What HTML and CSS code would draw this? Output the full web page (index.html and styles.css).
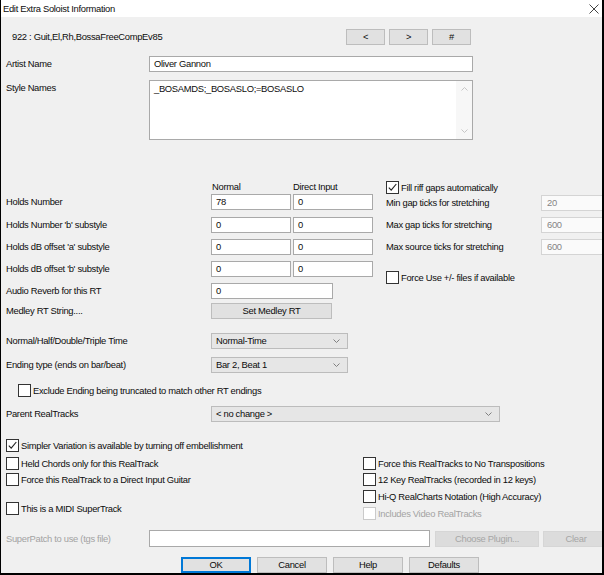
FILE: index.html
```html
<!DOCTYPE html>
<html>
<head>
<meta charset="utf-8">
<link rel="stylesheet" href="styles.css">
</head>
<body>
<div class="win">
  <div class="titlebar">
    <span class="title">Edit Extra Soloist Information</span>
    <svg class="close" width="10" height="10" viewBox="0 0 10 10"><path d="M0.5 0.5L9.5 9.5M9.5 0.5L0.5 9.5" stroke="#444" stroke-width="1"/></svg>
  </div>
  <div class="body">
    <div class="row r-id">
      <span class="idtext">922 : Guit,El,Rh,BossaFreeCompEv85</span>
      <div class="btn nav">&lt;</div>
      <div class="btn nav">&gt;</div>
      <div class="btn nav">#</div>
    </div>
    <div class="row r-artist">
      <span class="lbl">Artist Name</span>
      <div class="field wide">Oliver Gannon</div>
    </div>
    <div class="row r-style">
      <span class="lbl top">Style Names</span>
      <div class="field wide area">
        <span class="areatext">_BOSAMDS;_BOSASLO;=BOSASLO</span>
        <div class="scroll">
          <svg width="9" height="6" viewBox="0 0 9 6"><path d="M1.5 4.5L4.5 1.5L7.5 4.5" fill="none" stroke="#c6c6c6" stroke-width="1"/></svg>
          <svg width="9" height="6" viewBox="0 0 9 6"><path d="M1.5 1.5L4.5 4.5L7.5 1.5" fill="none" stroke="#c6c6c6" stroke-width="1"/></svg>
        </div>
      </div>
    </div>

    <div class="mid">
      <div class="midleft">
        <div class="hdr"><span class="h1">Normal</span><span class="h2">Direct Input</span></div>
        <div class="hrow r1"><span class="lbl2">Holds Number</span><div class="field num">78</div><div class="field num">0</div></div>
        <div class="hrow r2"><span class="lbl2">Holds Number 'b' substyle</span><div class="field num">0</div><div class="field num">0</div></div>
        <div class="hrow"><span class="lbl2">Holds dB offset 'a' substyle</span><div class="field num">0</div><div class="field num">0</div></div>
        <div class="hrow"><span class="lbl2">Holds dB offset 'b' substyle</span><div class="field num">0</div><div class="field num">0</div></div>
        <div class="hrow"><span class="lbl2">Audio Reverb for this RT</span><div class="field med">0</div></div>
        <div class="hrow r6"><span class="lbl2">Medley RT String....</span><div class="btn medbtn">Set Medley RT</div></div>
      </div>
      <div class="midright">
        <div class="chk"><span class="box"><svg width="11" height="11" viewBox="0 0 11 11"><path d="M1.8 5.6L4.2 8.2L9.3 2" fill="none" stroke="#222" stroke-width="1.1"/></svg></span>Fill riff gaps automatically</div>
        <div class="rrow first"><span class="rlbl">Min gap ticks for stretching</span><div class="field dis">20</div></div>
        <div class="rrow"><span class="rlbl">Max gap ticks for stretching</span><div class="field dis">600</div></div>
        <div class="rrow"><span class="rlbl">Max source ticks for stretching</span><div class="field dis">600</div></div>
        <div class="chk force"><span class="box"></span>Force Use +/- files if available</div>
      </div>
    </div>

    <div class="row r-time">
      <span class="lbl2">Normal/Half/Double/Triple Time</span>
      <div class="select s137">Normal-Time<svg width="9" height="6" viewBox="0 0 9 6"><path d="M1.5 1.5L4.5 4.5L7.5 1.5" fill="none" stroke="#808080" stroke-width="1"/></svg></div>
    </div>
    <div class="row r-end">
      <span class="lbl2">Ending type (ends on bar/beat)</span>
      <div class="select s137">Bar 2, Beat 1<svg width="9" height="6" viewBox="0 0 9 6"><path d="M1.5 1.5L4.5 4.5L7.5 1.5" fill="none" stroke="#808080" stroke-width="1"/></svg></div>
    </div>
    <div class="chk excl"><span class="box"></span>Exclude Ending being truncated to match other RT endings</div>
    <div class="row r-parent">
      <span class="lbl2">Parent RealTracks</span>
      <div class="select s289">&lt; no change &gt;<svg width="9" height="6" viewBox="0 0 9 6"><path d="M1.5 1.5L4.5 4.5L7.5 1.5" fill="none" stroke="#808080" stroke-width="1"/></svg></div>
    </div>
    <div class="chk simpler"><span class="box"><svg width="11" height="11" viewBox="0 0 11 11"><path d="M1.8 5.6L4.2 8.2L9.3 2" fill="none" stroke="#222" stroke-width="1.1"/></svg></span>Simpler Variation is available by turning off embellishment</div>

    <div class="cols">
      <div class="colleft">
        <div class="chk c1"><span class="box"></span>Held Chords only for this RealTrack</div>
        <div class="chk c2"><span class="box"></span>Force this RealTrack to a Direct Input Guitar</div>
        <div class="chk c3"><span class="box"></span>This is a MIDI SuperTrack</div>
      </div>
      <div class="colright">
        <div class="chk c1"><span class="box"></span>Force this RealTracks to No Transpositions</div>
        <div class="chk c2"><span class="box"></span>12 Key RealTracks (recorded in 12 keys)</div>
        <div class="chk c4"><span class="box"></span>Hi-Q RealCharts Notation (High Accuracy)</div>
        <div class="chk c4 disabled"><span class="box"></span>Includes Video RealTracks</div>
      </div>
    </div>

    <div class="row r-patch">
      <span class="lbl gray">SuperPatch to use (tgs file)</span>
      <div class="field patch"></div>
      <div class="btn disbtn plugin">Choose Plugin...</div>
      <div class="btn disbtn clear">Clear</div>
    </div>

    <div class="row r-actions">
      <div class="btn act ok">OK</div>
      <div class="btn act">Cancel</div>
      <div class="btn act">Help</div>
      <div class="btn act">Defaults</div>
    </div>
  </div>
</div>
</body>
</html>
```

FILE: styles.css
```css
* { box-sizing: border-box; margin: 0; padding: 0; }
html, body { margin: 0; width: 604px; height: 575px; overflow: hidden; background: #fff; }
body {
  font-family: "Liberation Sans", Arial, sans-serif;
  font-size: 9.4px;
  letter-spacing: -0.3px;
  color: #0c0c0c;
  line-height: 12px;
}
.win {
  width: 604px; height: 575px;
  border-left: 1px solid #000;
  border-right: 2px solid #000;
  border-bottom: 2px solid #000;
  background: #f0f0f0;
  display: flex; flex-direction: column;
  overflow: hidden;
}
.titlebar {
  height: 17px; flex: none;
  background: #fff;
  display: flex; align-items: center; justify-content: space-between;
  padding: 0 3px 0 2px;
}
.close { display: block; }
.body { flex: 1; padding-left: 5px; display: flex; flex-direction: column; overflow: hidden; }

.row { display: flex; align-items: center; flex: none; }
.lbl { width: 143px; flex: none; }
.lbl.top { align-self: flex-start; padding-top: 2px; }
.lbl2 { width: 205px; flex: none; }
.gray { color: #a3a3a3; }

.field {
  height: 16px; background: #fff; border: 1px solid #a9a9a9;
  display: flex; align-items: center; padding-left: 4px; flex: none;
}
.wide { width: 324px; }
.num { width: 80px; margin-right: 2px; }
.med { width: 122px; }
.dis { width: 70px; background: #fafafa; border-color: #d4d4d4; color: #858585; padding-left: 5px; }

.btn {
  height: 16px; background: #e1e1e1; border: 1px solid #bdbdbd;
  display: flex; align-items: center; justify-content: center; flex: none;
}

.r-id { margin-top: 12px; height: 16px; }
.idtext { margin-left: 6px; width: 334px; flex: none; }
.nav { width: 39px; margin-right: 4px; }

.r-artist { margin-top: 11px; height: 16px; }
.r-style { margin-top: 8px; height: 60px; align-items: stretch; }
.area { height: 60px; align-items: flex-start; padding-top: 2px; position: relative; }
.scroll {
  position: absolute; right: 0; top: 0; bottom: 0; width: 16px;
  background: #f7f7f7;
  display: flex; flex-direction: column; justify-content: space-between; align-items: center;
  padding: 5px 0;
}
.scroll svg { display: block; }

.mid { display: flex; margin-top: 41px; flex: none; }
.midleft { width: 380px; flex: none; display: flex; flex-direction: column; }
.hdr { height: 12px; display: flex; padding-left: 206px; }
.h1 { width: 81px; }
.hrow { display: flex; align-items: center; height: 16px; margin-top: 6px; }
.hrow.r1 { margin-top: 1px; }
.hrow.r2 { margin-top: 7px; }
.hrow.r6 { margin-top: 4px; }
.medbtn { width: 121px; }

.midright { flex: 1; display: flex; flex-direction: column; }
.rrow { display: flex; align-items: center; height: 16px; margin-top: 6px; }
.rrow.first { margin-top: 1px; }
.rlbl { width: 155px; flex: none; }
.chk.force { margin-top: 16px; }

.chk { display: flex; align-items: center; height: 13px; flex: none; white-space: nowrap; }
.box {
  width: 13px; height: 13px; background: #fff; border: 1px solid #333;
  margin-right: 2px; flex: none; display: flex; align-items: center; justify-content: center;
}
.box svg { display: block; }
.disabled { color: #a3a3a3; }
.disabled .box { border-color: #cacaca; }

.select {
  height: 16px; background: #e6e6e6; border: 1px solid #bcbcbc;
  display: flex; align-items: center; justify-content: space-between;
  padding: 0 6px 0 4px; flex: none;
}
.select svg { display: block; }
.s137 { width: 137px; }
.s289 { width: 289px; }

.r-time { margin-top: 14px; height: 16px; }
.r-end { margin-top: 8px; height: 16px; }
.chk.excl { margin-top: 11px; margin-left: 12px; }
.r-parent { margin-top: 9px; height: 16px; }
.chk.simpler { margin-top: 17px; }

.cols { display: flex; flex: none; }
.colleft { width: 357px; flex: none; display: flex; flex-direction: column; }
.colright { flex: 1; display: flex; flex-direction: column; }
.chk.c1 { margin-top: 5px; }
.chk.c2 { margin-top: 3px; }
.chk.c3 { margin-top: 16px; }
.chk.c4 { margin-top: 4px; }

.r-patch { margin-top: 10px; height: 17px; }
.patch { width: 281px; height: 17px; margin-right: 5px; }
.disbtn { background: #dcdcdc; border-color: #d6d6d6; color: #a6a6a6; height: 16px; }
.plugin { width: 104px; margin-right: 4px; }
.clear { width: 66px; }

.r-actions { margin-top: 10px; height: 16px; padding-left: 175px; }
.act { width: 70px; margin-right: 6px; }
.ok { border: 1px solid #0078d7; box-shadow: inset 0 0 0 1px #0078d7; }
```
